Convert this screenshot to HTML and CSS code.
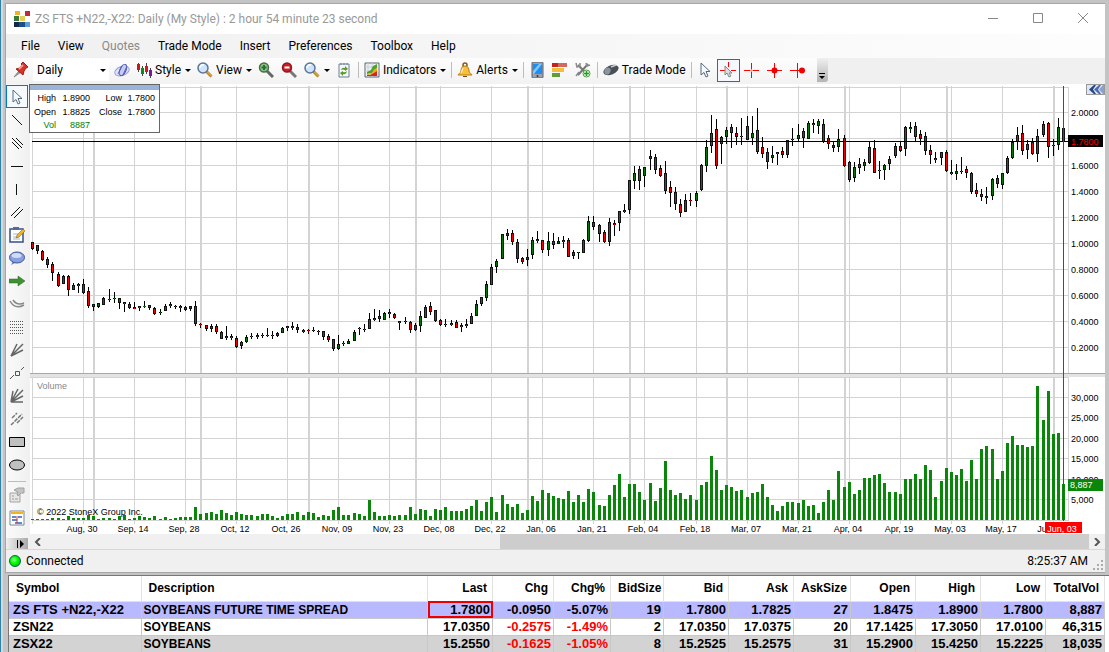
FILE: index.html
```html
<!DOCTYPE html>
<html lang="en">
<head>
    <meta charset="UTF-8">
    <meta name="viewport" content="width=device-width, initial-scale=1.0">
    <title>ZS FTS +N22,-X22: Daily</title>
    <link rel="stylesheet" href="styles.css">
</head>
<body>
    <svg class="defs" width="0" height="0" aria-hidden="true">
        <symbol id="i-pin" viewBox="0 0 16 16"><path d="M1 15l5-6 2 1z" fill="#999" stroke="#888"/><path d="M3 7l4-1 2-3-1-1 2-2 5 5-2 1-2 3-1 4z" fill="#d8332b" stroke="#9c1a14"/><path d="M6 7l4-4" stroke="#f59a92" stroke-width="2"/></symbol>
        <symbol id="i-live" viewBox="0 0 16 16"><ellipse cx="8" cy="9" rx="7.500" ry="4.500" transform="rotate(-20 8 9)" fill="#dfe2f8" stroke="#9aa2de"/><ellipse cx="9" cy="8" rx="3" ry="6" transform="rotate(25 9 8)" fill="#c6ccf2" stroke="#4a55b4"/><path d="M4 12L8 4M9 13l4-9" stroke="#5560bb"/></symbol>
        <symbol id="i-candles" viewBox="0 0 16 16"><path d="M2.500 1v9M6.500 4v10M10.500 1v11M14.500 6v10" stroke="#444"/><path d="M1 2h3v6H1z" fill="#c61a1a"/><path d="M5 6h3v6H5z" fill="#0a8a1a"/><path d="M9 4h3v6H9z" fill="#d61a1a"/><path d="M13 8h3v6h-3z" fill="#7818a0"/></symbol>
        <symbol id="i-lens" viewBox="0 0 16 16"><path d="M9.500 9.500l5 5" stroke="#b98127" stroke-width="3"/><path d="M10 9.500l4.500 4.500" stroke="#f0c05a"/><circle cx="6" cy="6" r="5" fill="#cfe4fa" stroke="#5d7494" stroke-width="1.500"/><path d="M3 6a3 3 0 0 1 4-3" stroke="#fff" fill="none" stroke-width="1.500"/></symbol>
        <symbol id="i-zoomin" viewBox="0 0 16 16"><path d="M9 9l6 6" stroke="#666" stroke-width="3"/><circle cx="6" cy="5.500" r="4.500" fill="#8fc08c" stroke="#4b6b4b" stroke-width="1.500"/><path d="M6 3v5M3.500 5.500h5" stroke="#1f7a22" stroke-width="2"/></symbol>
        <symbol id="i-zoomout" viewBox="0 0 16 16"><path d="M9 9l6 6" stroke="#777" stroke-width="3"/><circle cx="6" cy="5.500" r="4.500" fill="#c92027" stroke="#8d1a1e" stroke-width="1.500"/><path d="M3.500 5.500h5" stroke="#fff" stroke-width="2"/></symbol>
        <symbol id="i-page" viewBox="0 0 16 16"><path d="M3 2h10v13H3z" fill="#f4f8fc" stroke="#6c7f95"/><path d="M5 1v2M8 1v2M11 1v2" stroke="#6c7f95"/><path d="M5 8q1-3 4-2l0-2 3 3-3 2v-1q-2-1-4 0zM11 9q-1 4-4 3v2l-3-3 3-2v1q2 1 4-1z" fill="#5a9a1d"/></symbol>
        <symbol id="i-indicators" viewBox="0 0 16 16"><path d="M1 1h14v14H1z" fill="#eef1f4" stroke="#5b6470"/><path d="M4 1v14M8 1v14M1 5h14M1 9h14" stroke="#c9cfd6"/><path d="M3 10l4-2 2-4 4-2v4l-3 2-2 3-5 1z" fill="#49a32c"/><path d="M3 12l5-1 2-3 3-2v3l-3 3-7 1z" fill="#f2a71b"/><path d="M3 13h3l4-2 3-2v5H3z" fill="#d9231c"/></symbol>
        <symbol id="i-bell" viewBox="0 0 16 16"><circle cx="8" cy="3" r="2" fill="none" stroke="#7a5b20" stroke-width="1.500"/><path d="M8 4c3 0 4 2 4 5 0 2 3 3 3 4H1c0-1 3-2 3-4 0-3 1-5 4-5z" fill="#f8c038" stroke="#b37b12"/><path d="M6 14h4v1H6z" fill="#7a4b10"/><path d="M6 6c-1 2-1 4-2 5" stroke="#ffeaa5" fill="none" stroke-width="1.500"/></symbol>
        <symbol id="i-phone" viewBox="0 0 16 16"><rect x="3" y="0" width="11" height="16" rx="1" fill="#9aa3ad" stroke="#5a636e"/><path d="M4 2h9v10H4z" fill="#1f8df2"/><path d="M4 9l6-7h3L5 12H4z" fill="#7cc8ff"/><circle cx="8.500" cy="14" r="1" fill="#333"/></symbol>
        <symbol id="i-depth" viewBox="0 0 16 16"><path d="M0 1h15v4H0z" fill="#d1695f"/><path d="M0 6h12v4H0z" fill="#f2bf3a"/><path d="M0 11h8v4H0z" fill="#5f9f38"/><path d="M0 1h6v4H0z" fill="#c3241c"/></symbol>
        <symbol id="i-tools" viewBox="0 0 16 16"><path d="M3 13L13 2M3 3l8 8" stroke="#777" stroke-width="2"/><path d="M1 1l1 4 3-1V1M11 1l1 3 3-1M1 14l3-4" stroke="#8b8b8b" fill="none" stroke-width="1.500"/><circle cx="11.500" cy="11.500" r="3.500" fill="#eaf6e6" stroke="#46a13b"/><path d="M11.500 9v5M9 11.500h5" stroke="#2b9a25" stroke-width="1.500"/></symbol>
        <symbol id="i-trade" viewBox="0 0 16 16"><ellipse cx="8" cy="8" rx="8" ry="4.500" transform="rotate(-22 8 8)" fill="#4a5058"/><ellipse cx="4.500" cy="9" rx="3" ry="3.500" transform="rotate(25 4.500 9)" fill="#8c949e"/><path d="M8 5l5-2" stroke="#c6ccd2" stroke-width="1.500"/></symbol>
        <symbol id="i-cursor" viewBox="0 0 16 16"><path d="M4 1v12l3-2.500 2 4.500 2-1-2-4.500h4z" fill="#f5f8fc" stroke="#56687f"/></symbol>
        <symbol id="i-crosscursor" viewBox="0 0 16 16"><path d="M8.500 0v5M0 8.500h5M11 8.500h5" stroke="#f00"/><path d="M5 4v9l2-2 2 4 2-1-2-3h3z" fill="#ddd" stroke="#888"/></symbol>
        <symbol id="i-cross" viewBox="0 0 16 16"><path d="M8.500 1v6M8.500 10v6M1 8.500h6M10 8.500h6" stroke="#f00"/><path d="M8.500 7v3M7 8.500h3" stroke="#f88"/></symbol>
        <symbol id="i-crossdot" viewBox="0 0 16 16"><path d="M8.500 1v15M1 8.500h15" stroke="#f00"/><circle cx="8.500" cy="8.500" r="3" fill="#e00"/></symbol>
        <symbol id="i-crossside" viewBox="0 0 16 16"><path d="M8.500 1v15M1 8.500h15" stroke="#f00"/><circle cx="13" cy="8.500" r="3" fill="#e00"/></symbol>
        <symbol id="i-line" viewBox="0 0 16 16"><path d="M3 3l10 10" stroke="#111"/></symbol>
        <symbol id="i-lines3" viewBox="0 0 16 16"><path d="M3 3l10 10M3 7l7 7M7 3l7 7" stroke="#111"/></symbol>
        <symbol id="i-hline" viewBox="0 0 16 16"><path d="M2 8.500h12" stroke="#111"/></symbol>
        <symbol id="i-vline" viewBox="0 0 16 16"><path d="M7.500 3v11" stroke="#111"/></symbol>
        <symbol id="i-parallel" viewBox="0 0 16 16"><path d="M2 12l9-9M5 14l9-9" stroke="#111"/></symbol>
        <symbol id="i-note" viewBox="0 0 16 16"><path d="M1 2h13v13H1z" fill="#fff" stroke="#35508f" stroke-width="1.500"/><path d="M4 0h6v3H4z" fill="#54699c"/><path d="M4 7h7M4 10h6M4 12h7" stroke="#a9b6cf"/><path d="M7 11l1-3 6-6 2 2-6 6z" fill="#f0b429" stroke="#7e5a14" stroke-width=".500"/></symbol>
        <symbol id="i-bubble" viewBox="0 0 16 16"><path d="M4 11l-2 4 6-3z" fill="#6c86c4"/><ellipse cx="8" cy="7.500" rx="7.500" ry="5.500" fill="#86a0e0" stroke="#3f5596"/><ellipse cx="7.500" cy="5.500" rx="5" ry="2.500" fill="#cfdcf8"/></symbol>
        <symbol id="i-arrow" viewBox="0 0 16 16"><path d="M0 6h9V3l7 5-7 5v-3H0z" fill="#3d9130" stroke="#2c6424" stroke-width=".500"/></symbol>
        <symbol id="i-arc" viewBox="0 0 16 16"><path d="M1 5q5 9 14 4M4 4q4 6 11 3" stroke="#888" fill="none" stroke-width="1.500"/></symbol>
        <symbol id="i-rows" viewBox="0 0 16 16"><path d="M1 2.500h14M1 5.500h14M1 8.500h14M1 11.500h14M1 14.500h14" stroke="#555" stroke-dasharray="1 1"/></symbol>
        <symbol id="i-fan3" viewBox="0 0 16 16"><path d="M2 14L8 2M2 14L14 2M2 14l12-6" stroke="#666" stroke-width="1.500"/></symbol>
        <symbol id="i-point" viewBox="0 0 16 16"><path d="M1 14l4-4M6.500 6.500h4v4h-4zM12 5l3-3" stroke="#555" fill="none"/></symbol>
        <symbol id="i-fan5" viewBox="0 0 16 16"><path d="M2 14L4 3M2 14L9 1M2 14L14 2M2 14l12-6M2 14h12" stroke="#666" stroke-width="1.500"/></symbol>
        <symbol id="i-pitch" viewBox="0 0 16 16"><path d="M3 7l5-5M2 14L13 3M8 12l6-6" stroke="#777" stroke-width="1.500" stroke-dasharray="4 1"/></symbol>
        <symbol id="i-rect" viewBox="0 0 16 16"><path d="M.500 3.500h15v9H.500z" fill="#c0c0c0" stroke="#000"/></symbol>
        <symbol id="i-oval" viewBox="0 0 16 16"><ellipse cx="8" cy="8" rx="7.500" ry="5" fill="#c0c0c0" stroke="#000"/></symbol>
        <symbol id="i-hand" viewBox="0 0 16 16"><path d="M1 6h10v9H1z" fill="#e6e6e6" stroke="#a3a3a3"/><path d="M5 3l4-2h6v5h-3l-3 3-1-2 1-2z" fill="#c4c4c4" stroke="#a0a0a0"/><path d="M3 9h2M3 12h2M6 12h3" stroke="#999"/></symbol>
        <symbol id="i-panel" viewBox="0 0 16 16"><path d="M1 1h14v14H1z" fill="#fff" stroke="#7b8794"/><path d="M2 2h12v2H2z" fill="#f4b21c"/><path d="M3 7h4M9 7h4M3 10h5M6 13h7" stroke="#2b63b5" stroke-width="1.500"/><path d="M8 6v7" stroke="#d33"/></symbol>
        <symbol id="i-logo" viewBox="0 0 16 16"><path d="M1 0h5v4H1z" fill="#f0b323"/><path d="M11 0h5v5h-5z" fill="#c4263a"/><path d="M0 5h5v5H0z" fill="#3c7a3a"/><path d="M6 5h5v5H6z" fill="#e0cf57"/><path d="M0 11h5v5H0z" fill="#12294f"/><path d="M5 11h6v5H5z" fill="#1f4e86"/><path d="M11 11h5v5h-5z" fill="#5aa0d6"/></symbol>
    </svg>

    <main class="window">
        <header class="titlebar">
            <svg class="logo"><use href="#i-logo"/></svg>
            <span class="title">ZS FTS +N22,-X22: Daily (My Style) : 2 hour 54 minute 23 second</span>
            <button class="win-btn" aria-label="Minimize"><svg viewBox="0 0 12 12"><path d="M1 6.500h10"/></svg></button>
            <button class="win-btn" aria-label="Maximize"><svg viewBox="0 0 12 12"><path d="M1.500 1.500h9v9h-9z"/></svg></button>
            <button class="win-btn" aria-label="Close"><svg viewBox="0 0 12 12"><path d="M1 1l10 10M11 1L1 11"/></svg></button>
        </header>

        <nav class="menubar">
            <button>File</button>
            <button>View</button>
            <button disabled>Quotes</button>
            <button>Trade Mode</button>
            <button>Insert</button>
            <button>Preferences</button>
            <button>Toolbox</button>
            <button>Help</button>
        </nav>

        <div class="toolbar">
            <div class="tools">
                <button class="tool" aria-label="Pin"><svg><use href="#i-pin"/></svg></button>
                <div class="period">
                    <select aria-label="Period"><option>Daily</option><option>Weekly</option></select>
                    <span class="caret"></span>
                </div>
                <button class="tool" aria-label="Live"><svg><use href="#i-live"/></svg></button>
                <button class="tool wide"><svg><use href="#i-candles"/></svg>Style<span class="caret"></span></button>
                <button class="tool wide"><svg><use href="#i-lens"/></svg>View<span class="caret"></span></button>
                <button class="tool" aria-label="Zoom in"><svg><use href="#i-zoomin"/></svg></button>
                <button class="tool" aria-label="Zoom out"><svg><use href="#i-zoomout"/></svg></button>
                <button class="tool wide" aria-label="Zoom"><svg><use href="#i-lens"/></svg><span class="caret"></span></button>
                <button class="tool" aria-label="Refresh"><svg><use href="#i-page"/></svg></button>
                <span class="sep"></span>
                <button class="tool wide"><svg><use href="#i-indicators"/></svg>Indicators<span class="caret"></span></button>
                <span class="sep"></span>
                <button class="tool wide"><svg><use href="#i-bell"/></svg>Alerts<span class="caret"></span></button>
                <span class="sep"></span>
                <button class="tool" aria-label="Mobile"><svg><use href="#i-phone"/></svg></button>
                <button class="tool" aria-label="Depth"><svg><use href="#i-depth"/></svg></button>
                <button class="tool" aria-label="Settings"><svg><use href="#i-tools"/></svg></button>
                <span class="sep"></span>
                <button class="tool wide"><svg><use href="#i-trade"/></svg>Trade Mode</button>
                <span class="sep"></span>
                <button class="tool" aria-label="Pointer"><svg><use href="#i-cursor"/></svg></button>
                <button class="tool active" aria-label="Cross pointer"><svg><use href="#i-crosscursor"/></svg></button>
                <button class="tool" aria-label="Cross"><svg><use href="#i-cross"/></svg></button>
                <button class="tool" aria-label="Cross snap"><svg><use href="#i-crossdot"/></svg></button>
                <button class="tool" aria-label="Cross close"><svg><use href="#i-crossside"/></svg></button>
            </div>
            <button class="overflow" aria-label="More tools"><span class="caret"></span></button>
        </div>

        <div class="workspace">
            <div class="drawbar">
                <button class="tool active" aria-label="Select"><svg><use href="#i-cursor"/></svg></button>
                <button class="tool" aria-label="Line"><svg><use href="#i-line"/></svg></button>
                <button class="tool" aria-label="Regression"><svg><use href="#i-lines3"/></svg></button>
                <button class="tool" aria-label="Horizontal line"><svg><use href="#i-hline"/></svg></button>
                <button class="tool" aria-label="Vertical line"><svg><use href="#i-vline"/></svg></button>
                <button class="tool" aria-label="Channel"><svg><use href="#i-parallel"/></svg></button>
                <button class="tool" aria-label="Note"><svg><use href="#i-note"/></svg></button>
                <button class="tool" aria-label="Callout"><svg><use href="#i-bubble"/></svg></button>
                <button class="tool" aria-label="Arrow"><svg><use href="#i-arrow"/></svg></button>
                <button class="tool" aria-label="Arcs"><svg><use href="#i-arc"/></svg></button>
                <button class="tool" aria-label="Retracement"><svg><use href="#i-rows"/></svg></button>
                <button class="tool" aria-label="Fan"><svg><use href="#i-fan3"/></svg></button>
                <button class="tool" aria-label="Point"><svg><use href="#i-point"/></svg></button>
                <button class="tool" aria-label="Gann fan"><svg><use href="#i-fan5"/></svg></button>
                <button class="tool" aria-label="Pitchfork"><svg><use href="#i-pitch"/></svg></button>
                <button class="tool" aria-label="Rectangle"><svg><use href="#i-rect"/></svg></button>
                <button class="tool" aria-label="Ellipse"><svg><use href="#i-oval"/></svg></button>
                <hr>
                <button class="tool" aria-label="Properties"><svg><use href="#i-hand"/></svg></button>
                <button class="tool" aria-label="Panels"><svg><use href="#i-panel"/></svg></button>
                <button class="more" aria-label="More drawing tools"><svg viewBox="0 0 8 8"><path d="M1 0h1v8H1zM4 0l4 4-4 4z"/></svg></button>
            </div>
            <div class="chart-area">
                <svg class="chart" id="chart"></svg>
                <div class="quote-box">
                    <div class="quote-grip"></div>
                    <dl>
                        <dt>High</dt><dd>1.8900</dd><dt>Low</dt><dd>1.7800</dd>
                        <dt>Open</dt><dd>1.8825</dd><dt>Close</dt><dd>1.7800</dd>
                        <dt class="vol">Vol</dt><dd class="vol">8887</dd>
                    </dl>
                </div>
                <button class="collapse" aria-label="Collapse"><svg viewBox="0 0 16 9"><path d="M6 0L1 4.500 6 9h2L5 4.500 8 0z" fill="#24458c"/><path d="M11 0L6 4.500 11 9h2l-3-4.500L13 0z" fill="#4c6cad"/><path d="M15 0l-4 4.500L15 9h1V0z" fill="#8ba0cc"/></svg></button>
                <div class="scrollbar">
                    <button aria-label="Scroll left"><svg viewBox="0 0 8 8"><path d="M6 0L2 4l4 4"/></svg></button>
                    <div class="track"><div class="thumb"></div></div>
                    <button aria-label="Scroll right"><svg viewBox="0 0 8 8"><path d="M2 0l4 4-4 4"/></svg></button>
                </div>
            </div>
        </div>

        <footer class="status">
            <span class="led"></span>
            <span>Connected</span>
            <span class="clock">8:25:37 AM</span>
            <svg class="grip" viewBox="0 0 12 12"><path d="M8 0h2v2H8zM4 4h2v2H4zM8 4h2v2H8zM0 8h2v2H0zM4 8h2v2H4zM8 8h2v2H8z" fill="#aaa"/></svg>
        </footer>
    </main>

    <section class="quotes">
        <table>
            <colgroup>
                <col class="c-symbol"><col class="c-desc"><col class="c-num"><col class="c-mid"><col class="c-small"><col class="c-size"><col class="c-num"><col class="c-num"><col class="c-small"><col class="c-num"><col class="c-num"><col class="c-num"><col class="c-total">
            </colgroup>
            <thead>
                <tr><th>Symbol</th><th>Description</th><th>Last</th><th>Chg</th><th>Chg%</th><th>BidSize</th><th>Bid</th><th>Ask</th><th>AskSize</th><th>Open</th><th>High</th><th>Low</th><th>TotalVol</th></tr>
            </thead>
            <tbody>
                <tr class="selected"><td>ZS FTS +N22,-X22</td><td>SOYBEANS FUTURE TIME SPREAD</td><td class="flash">1.7800</td><td>-0.0950</td><td>-5.07%</td><td>19</td><td>1.7800</td><td>1.7825</td><td>27</td><td>1.8475</td><td>1.8900</td><td>1.7800</td><td>8,887</td></tr>
                <tr><td>ZSN22</td><td>SOYBEANS</td><td>17.0350</td><td class="down">-0.2575</td><td class="down">-1.49%</td><td>2</td><td>17.0350</td><td>17.0375</td><td>20</td><td>17.1425</td><td>17.3050</td><td>17.0100</td><td>46,315</td></tr>
                <tr class="alt"><td>ZSX22</td><td>SOYBEANS</td><td>15.2550</td><td class="down">-0.1625</td><td class="down">-1.05%</td><td>8</td><td>15.2525</td><td>15.2575</td><td>31</td><td>15.2900</td><td>15.4250</td><td>15.2225</td><td>18,035</td></tr>
            </tbody>
        </table>
    </section>

    <script src="chart.js"></script>
</body>
</html>
```
FILE: chart.js
```js
// one entry per day: wick top, body top, body bottom, wick bottom, direction
const candles = `242,242,249,250r 245,245,251,254r 250,251,260,261r 257,259,265,268r 262,264,273,281r 272,274,286,287r 275,276,284,284g 275,276,290,296r 283,285,290,290g 283,284,286,293g
279,284,293,294r 287,291,306,308r 304,304,307,311r 303,303,307,308g 297,298,305,305g 289,299,300,302r 292,298,299,303g 298,298,303,309r 302,302,304,312r 302,304,308,309r
302,307,309,309r 306,306,308,311g 301,306,306,308g 305,305,308,310r 307,308,314,315r 309,312,313,315g 304,306,311,311g 302,304,306,308r 305,306,307,309r 305,306,308,312r
306,307,310,311r 306,306,309,311g 301,306,324,326r 323,324,325,328r 325,325,329,331r 324,326,329,332g 324,326,332,334r 331,332,339,339r 326,336,338,340g 334,336,338,340r
336,338,347,348r 341,342,346,349g 335,337,342,343g 333,336,337,339r 333,335,337,339g 333,335,336,338g 328,335,336,337r 331,335,336,339r 332,333,336,337g 327,328,333,333g
326,326,328,331g 322,326,328,330g 324,327,330,333r 329,330,332,333g 329,330,331,334r 327,330,331,332r 330,331,332,335r 331,331,337,340r 334,336,340,342r 339,339,349,351r
335,344,349,350g 341,343,344,346g 339,341,344,344g 330,332,341,341g 327,328,329,335g 324,329,330,332r 313,319,329,329g 309,318,320,321g 310,316,319,322r 312,313,320,320g
309,312,314,318g 313,314,318,319r 321,321,323,330r 317,321,322,324g 321,322,330,333r 323,325,330,331g 311,316,326,332g 305,307,318,318g 302,306,312,315r 310,310,321,322r
319,320,325,326r 319,324,325,327r 320,323,325,326g 320,322,328,328r 323,325,327,332g 319,324,326,328g 313,316,324,324g 300,304,316,316g 297,297,304,306g 281,284,298,301g
264,267,285,285g 259,261,267,273g 234,234,259,259g 229,233,236,240g 230,233,242,245r 239,242,259,263r 257,258,262,264r 249,257,260,266r 237,240,255,259g 231,239,241,243g
240,240,250,253r 232,241,250,256g 233,241,245,249r 237,241,244,244g 236,240,242,248r 238,240,257,257r 250,252,256,259g 252,252,253,259g 239,240,253,253g 216,221,241,242g
216,222,227,230r 224,225,234,242r 230,232,242,243r 218,222,242,246g 220,223,225,236r 211,211,223,231g 204,210,212,213r 180,180,210,214g 166,173,181,189g 166,169,181,190r
167,167,176,187g 150,156,159,170r 154,157,170,174r 165,168,176,177r 161,173,191,194r 181,187,193,207r 187,192,204,210r 199,204,213,217r 194,200,212,212g 193,200,201,206r
191,193,201,207g 164,165,190,191g 140,147,166,172g 115,133,146,153g 119,129,166,169r 136,137,144,164g 127,130,137,144g 124,127,133,148r 127,133,137,145r 118,136,137,145r
116,126,140,140r 116,133,138,145g 108,130,152,154r 137,147,154,158r 148,152,162,169r 146,155,158,163g 152,152,154,165r 147,151,155,158r 140,140,155,158g 128,139,140,146g
124,135,139,141g 128,131,138,148r 121,123,139,139g 119,123,125,133g 119,121,126,134g 119,124,142,143r 135,138,144,149r 141,145,148,152r 129,139,147,152g 135,138,166,167r
161,162,180,182r 162,167,178,182g 158,164,168,174g 159,162,166,171g 142,147,163,164g 140,148,173,173r 161,170,171,179g 164,165,170,180g 156,159,164,170g 143,146,156,158g
141,146,151,152r 126,127,149,156g 122,127,129,133g 122,126,137,141r 130,134,139,145r 132,136,151,155r 145,150,155,164r 152,158,160,163r 152,152,158,165g 150,152,171,172r
160,172,174,175r 164,171,174,180g 157,171,172,174g 166,169,173,178r 172,173,192,194r 183,190,194,197r 189,194,197,201r 187,196,198,204r 178,179,196,200g 175,178,184,188r
173,173,185,189g 156,158,173,174g 139,142,158,159g 127,135,142,150g 125,133,151,155r 140,144,150,159g 138,142,154,155r 129,136,154,162g 121,124,135,137g 122,123,147,158r
139,145,146,156r 118,127,145,150g 128,128,141,141r`.split(/\s+/);

const volumes = [
    1,1,1,1,2,2,1,4,2,2, 2,5,4,1,2,2,1,4,5,1, 2,4,3,2,4,1,3,1,2,3,
    3,3,13,6,7,8,6,10,7,5, 8,6,5,5,4,6,6,4,2,4, 6,6,8,5,8,7,3,5,4,10,
    13,5,5,7,6,4,20,8,4,4, 5,4,5,5,13,6,11,10,4,11, 10,13,9,9,9,11,14,20,9,18,
    23,8,25,16,13,16,7,10,24,19, 30,27,24,22,21,29,18,25,18,31, 28,15,14,25,35,46,23,36,36,28,
    20,37,19,32,59,30,25,27,21,25, 20,35,38,64,50,30,35,33,29,30, 23,27,28,36,23,15,9,14,18,18,
    17,20,14,15,7,18,30,20,49,33, 38,26,30,42,42,45,46,37,28,28, 26,41,41,46,41,55,50,23,39,52,
    48,45,51,39,60,41,71,74,71,41, 49,77,84,75,75,73,74,134,100,129, 86,87,36
];

const dates = ['Aug, 30', 'Sep, 14', 'Sep, 28', 'Oct, 12', 'Oct, 26', 'Nov, 09', 'Nov, 23', 'Dec, 08', 'Dec, 22', 'Jan, 06',
    'Jan, 21', 'Feb, 04', 'Feb, 18', 'Mar, 07', 'Mar, 21', 'Apr, 04', 'Apr, 19', 'May, 03', 'May, 17', 'Jun, 01'];
const monthStarts = [12, 33, 54, 75, 97, 117, 136, 159, 179, 200];

const TOP = 84;         // candle values are measured from the top of the window
const BASE = 436;       // volume zero line
const svg = document.getElementById('chart');

function rect(x, y, w, h, fill) {
    return `<rect x="${x}" y="${y}" width="${w}" height="${h}" fill="${fill}"/>`;
}

function label(x, y, text, cls) {
    return `<text x="${x}" y="${y}" class="${cls || 'axis'}">${text}</text>`;
}

function draw() {
    const width = svg.clientWidth;
    const right = width - 37;
    const step = (width - 44) / (candles.length - 1);
    const xAt = i => 2 + Math.round(i * step);
    let out = '';

    // grid
    for (let i = 0; i <= 200; i += 10) {
        out += rect(xAt(i), 2, 1, 287, '#d3d3d3') + rect(xAt(i), 293, 1, 147, '#d3d3d3');
    }
    monthStarts.forEach(i => {
        out += rect(xAt(i), 2, 2, 287, '#d3d3d3') + rect(xAt(i), 293, 2, 144, '#d3d3d3');
    });
    [3, 28, 54, 81, 107, 133, 159, 185, 211, 237, 263].forEach((y, n) => {
        out += rect(2, y, right - 2, 1, '#d3d3d3');
        if (n === 1 || n > 2) {
            out += label(right + 3, y + 4, (2.2 - n * 0.2).toFixed(4));
        }
    });
    [313, 333, 354, 374, 395, 415].forEach((y, n) => {
        out += rect(2, y, right - 2, 1, '#d3d3d3');
        out += label(right + 3, y + 4, (30 - n * 5) + ',000');
    });
    out += rect(right, 3, 1, 286, '#d3d3d3') + rect(right, 293, 1, 144, '#d3d3d3');
    out += rect(2, BASE, right - 1, 1, '#d3d3d3');

    // splitter between the panes
    out += rect(0, 289, width, 1, '#a8a8a8') + rect(0, 290, width, 3, '#e3e3e3') + rect(0, 293, right, 1, '#d3d3d3');
    out += label(7, 305, 'Volume', 'axis muted');

    volumes.forEach((v, i) => {
        out += rect(xAt(i) - 1, BASE - v, 3, v, '#0a860a');
    });

    candles.forEach((c, i) => {
        const [high, top, bottom, low] = c.slice(0, -1).split(',').map(v => v - TOP);
        const fill = c.endsWith('r') ? '#f00000' : '#007a00';
        const x = xAt(i);
        out += rect(x, high, 1, Math.max(low - high, 1), '#000');
        if (bottom - top < 2) {
            out += rect(x - 1, top, 3, 1, bottom === top ? fill : '#000') + rect(x, top, 1, 1, fill);
        } else {
            out += rect(x - 1, top, 3, bottom - top, '#111') + rect(x, top + 1, 1, Math.max(bottom - top - 2, 1), fill);
        }
    });

    dates.forEach((d, n) => {
        out += label(xAt((n + 1) * 10) - 1, 448, d, 'axis date');
    });
    out += label(7, 431, '© 2022 StoneX Group Inc.');

    // last price, last volume and cursor date
    const last = xAt(candles.length - 1);
    out += rect(2, 57, right, 1, '#000');
    out += rect(last, 2, 1, 435, '#f00');
    out += rect(right, 51, 35, 12, '#000') + label(right + 3, 61, '1.7800', 'axis price');
    out += rect(right, 395, 35, 12, '#0a860a') + label(right + 2, 404, '8,887', 'axis light');
    out += rect(last - 18, 438, 37, 11, '#f00') + label(last - 1, 448, 'Jun, 03', 'axis date light');

    svg.innerHTML = out;
}

draw();
window.addEventListener('resize', draw);
```
FILE: styles.css
```css
* {
    box-sizing: border-box;
}
body {
    margin: 0;
    padding: 3px 4px 0 5px;
    font-family: Roboto, "Open Sans", sans-serif;
    font-size: 12px;
    color: #000;
    background: linear-gradient(90deg, #2f82a8 0, #2f82a8 1px, #d6d9db 1px, #d6d9db 3px, #c4c4c4 3px) #c4c4c4;
}
button {
    font: inherit;
    color: inherit;
    background: none;
    border: 0;
    padding: 0;
}
.defs {
    position: absolute;
}
.window {
    border: 1px solid #a6a6a6;
    border-width: 1px 0 1px 1px;
    background: #f0f0f0;
}
.titlebar {
    display: flex;
    align-items: center;
    height: 30px;
    padding-left: 8px;
    background: #fff;
    color: #999;
}
.logo {
    width: 16px;
    height: 16px;
}
.title {
    flex: 1;
    margin-left: 5px;
}
.win-btn {
    width: 45px;
    height: 30px;
}
.win-btn svg {
    width: 12px;
    height: 12px;
    fill: none;
    stroke: #888;
}
.menubar {
    display: flex;
    align-items: center;
    gap: 18px;
    height: 24px;
    padding-left: 15px;
    background: linear-gradient(90deg, #f0f0f0, #fdfdfd);
}
.menubar button:disabled {
    color: #8a8a8a;
}
.toolbar {
    display: flex;
    height: 26px;
    background: #f0f0f0;
}
.tools {
    display: flex;
    flex: none;
    align-items: center;
    width: 811px;
    padding: 0 0 2px 3px;
    background: linear-gradient(#fdfdfd, #f2f2f2);
}
.tool {
    display: flex;
    align-items: center;
    justify-content: center;
    flex: none;
    width: 23px;
    height: 23px;
    border: 1px solid transparent;
}
.tool svg {
    flex: none;
    width: 16px;
    height: 16px;
}
.tool.wide {
    width: auto;
    gap: 3px;
    padding: 0 2px;
}
.tool.active {
    border-color: #0078d7;
    background: #f5f9fd;
}
.caret {
    flex: none;
    width: 6px;
    margin-left: 1px;
    border: 3px solid transparent;
    border-top-color: #000;
    border-bottom: 0;
}
.period {
    display: flex;
    flex: none;
    align-items: center;
    width: 76px;
    height: 22px;
    margin: 0 1px;
    background: #fff;
}
.period select {
    flex: 1;
    appearance: none;
    border: 0;
    padding: 0 4px;
    font: inherit;
    background: none;
}
.period .caret {
    margin-right: 3px;
}
.sep {
    flex: none;
    width: 1px;
    height: 16px;
    margin: 0 2px;
    background: #bdbdbd;
}
.overflow {
    display: flex;
    align-items: flex-end;
    width: 11px;
    height: 24px;
    padding-bottom: 3px;
    border-radius: 0 0 3px 0;
    background: linear-gradient(#f0f0f0, #b4b4b4);
}
.overflow .caret {
    position: relative;
    margin-left: 2px;
}
.overflow .caret::before {
    content: "";
    position: absolute;
    left: -3px;
    top: -6px;
    width: 6px;
    height: 1px;
    background: #000;
}
.workspace {
    display: flex;
}
.drawbar {
    flex: none;
    display: flex;
    flex-direction: column;
    width: 24px;
    padding-top: 1px;
    background: linear-gradient(90deg, #fafafa, #f0f0f0);
}
.drawbar .tool {
    width: 22px;
}
.drawbar hr {
    width: 18px;
    margin: 5px 2px 1px;
    border: 0;
    border-top: 1px solid #bdbdbd;
}
.more {
    height: 11px;
    width: 22px;
    margin-top: 9px;
    padding-left: 6px;
    line-height: 0;
    background: linear-gradient(90deg, #f0f0f0, #a8a8a8);
}
.more svg {
    width: 8px;
    height: 8px;
}
.chart-area {
    position: relative;
    flex: 1;
    min-width: 0;
    background: #fff;
}
.chart {
    display: block;
    width: 100%;
    height: 450px;
    shape-rendering: crispEdges;
}
.axis {
    font-family: "Liberation Sans", sans-serif;
    font-size: 9px;
}
.date {
    text-anchor: middle;
}
.muted {
    fill: #888;
}
.price {
    fill: #f00;
}
.light {
    fill: #fff;
}
.quote-box {
    position: absolute;
    left: -1px;
    top: 0;
    width: 131px;
    height: 49px;
    border: 1px solid #666;
    background: #fff;
    font-family: "Liberation Sans", sans-serif;
    font-size: 9px;
    line-height: 14px;
}
.quote-grip {
    height: 5px;
    background: #9bb3d6;
}
.quote-box dl {
    display: grid;
    grid-template-columns: 26px 30px 28px 29px;
    column-gap: 4px;
    margin: 0;
    padding-top: 1px;
    text-align: right;
    white-space: nowrap;
}
.quote-box dd {
    margin: 0;
}
.quote-box .vol {
    color: #008000;
    line-height: 13px;
}
.collapse {
    position: absolute;
    right: 0;
    top: 0;
    width: 19px;
    height: 11px;
    border: 1px solid #999;
    background: #dfe6f2;
    line-height: 0;
}
.collapse svg {
    width: 16px;
    height: 9px;
}
.scrollbar {
    display: flex;
    height: 15px;
    background: #f0f0f0;
}
.scrollbar button {
    width: 16px;
    line-height: 0;
}
.scrollbar svg {
    width: 8px;
    height: 8px;
    fill: none;
    stroke: #555;
    stroke-width: 2;
}
.track {
    flex: 1;
}
.thumb {
    width: 56.5%;
    height: 15px;
    margin-left: auto;
    background: #cdcdcd;
}
.status {
    display: flex;
    align-items: center;
    height: 23px;
    padding-left: 3px;
    border-top: 1px solid #d7d7d7;
}
.led {
    width: 12px;
    height: 12px;
    margin-right: 5px;
    border: 1px solid #064;
    border-radius: 50%;
    background: radial-gradient(circle at 4px 4px, #9f9, #0f0 40%, #0a0);
}
.clock {
    margin-left: auto;
}
.grip {
    align-self: flex-end;
    width: 12px;
    height: 12px;
    margin-left: 5px;
}
.quotes {
    margin: 2px -4px 0 3px;
    border: 1px solid #777;
    border-width: 1px 0 0 1px;
    background: #fff;
    font-family: "Liberation Sans", Arial, sans-serif;
    font-size: 13px;
}
.quotes table {
    width: calc(100% - 4px);
    table-layout: fixed;
    border-collapse: collapse;
    font-weight: bold;
    white-space: nowrap;
    text-align: right;
}
.c-symbol { width: 132px; }
.c-desc { width: auto; }
.c-num { width: 65px; }
.c-mid { width: 61px; }
.c-small { width: 57px; }
.c-size { width: 53px; }
.c-total { width: 59px; }
.quotes th,
.quotes td {
    height: 17px;
    padding: 0 2px;
    border: 1px solid #c8c8c8;
    border-width: 0 1px 1px 0;
    line-height: 16px;
}
.quotes th {
    height: 25px;
    padding: 0 5px 0 7px;
    border-color: #e2e2e2;
    font-size: 12px;
}
.quotes th:nth-child(-n+2),
.quotes td:nth-child(-n+2) {
    text-align: left;
}
.quotes td:nth-child(2) {
    font-size: 12px;
}
.quotes td:first-child {
    padding-left: 4px;
}
.selected {
    background: #b9b9ff;
}
.alt {
    background: #d3d3d3;
}
.down {
    color: #f00;
}
.quotes .flash {
    outline: 2px solid #e00;
    outline-offset: -2px;
}
```
